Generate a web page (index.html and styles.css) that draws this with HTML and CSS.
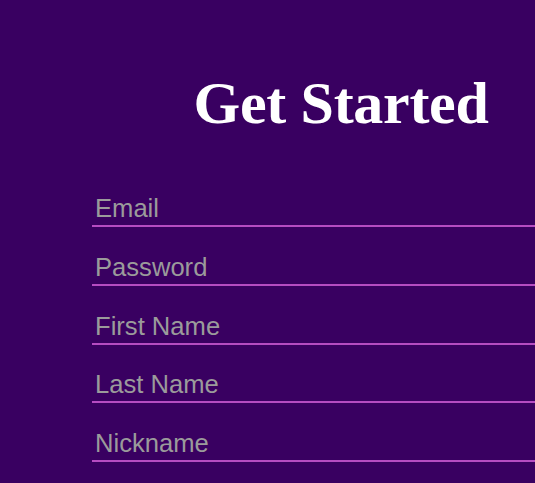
FILE: index.html
```html
<!DOCTYPE html>
<html lang="en">
<head>
<meta charset="utf-8">
<title>Get Started</title>
<link rel="stylesheet" href="styles.css">
</head>
<body>
<main class="signup">
  <h1 class="signup__title">Get Started</h1>
  <form class="signup__form">
    <input class="signup__input" type="email" placeholder="Email">
    <input class="signup__input" type="password" placeholder="Password">
    <input class="signup__input" type="text" placeholder="First Name">
    <input class="signup__input" type="text" placeholder="Last Name">
    <input class="signup__input" type="text" placeholder="Nickname">
  </form>
</main>
</body>
</html>
```

FILE: styles.css
```css
html, body {
  margin: 0;
  padding: 0;
  background: #390061;
  overflow: hidden;
  height: 100%;
}

.signup {
  width: 498px;
  margin-left: 92px;
  padding-top: 73px;
}

.signup__title {
  margin: 0;
  font-family: "Liberation Serif", "Times New Roman", serif;
  font-weight: bold;
  font-size: 60px;
  line-height: 60px;
  color: #ffffff;
  text-align: center;
  letter-spacing: -0.3px;
}

.signup__form {
  display: flex;
  flex-direction: column;
  gap: 23.75px;
  margin-top: 59px;
}

.signup__input {
  display: block;
  width: 100%;
  box-sizing: content-box;
  height: 33px;
  margin: 0;
  padding: 0 0 0 3px;
  border: none;
  border-bottom: 2px solid #b64cc2;
  background: transparent;
  font-family: "Liberation Sans", Arial, sans-serif;
  font-size: 25.6px;
  color: #ffffff;
  outline: none;
}

.signup__input::placeholder {
  color: #9b9b9b;
  opacity: 1;
}
```
